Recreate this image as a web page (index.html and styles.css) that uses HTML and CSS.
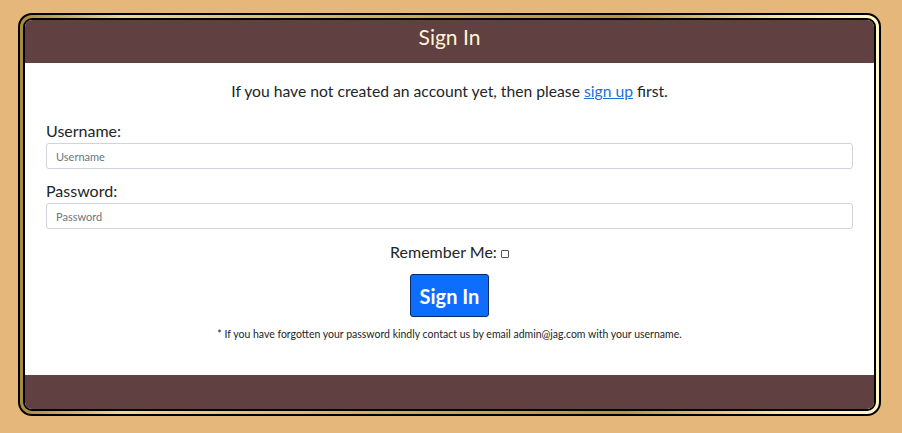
FILE: index.html
```html
<!DOCTYPE html>
<html lang="en">
<head>
<meta charset="utf-8">
<title>Sign In</title>
<link rel="stylesheet" href="styles.css">
</head>
<body>
<div class="frame">
  <div class="card">
    <div class="card-header">Sign In</div>
    <div class="card-body">
      <p class="intro">If you have not created an account yet, then please <a href="#">sign up</a> first.</p>
      <label class="label" for="username">Username:</label>
      <input class="input" id="username" type="text" placeholder="Username">
      <label class="label label-pw" for="password">Password:</label>
      <input class="input" id="password" type="password" placeholder="Password">
      <div class="remember">Remember Me: <input class="check" type="checkbox"></div>
      <div class="actions"><button class="btn" type="button">Sign In</button></div>
      <p class="note">* If you have forgotten your password kindly contact us by email admin@jag.com with your username.</p>
    </div>
    <div class="card-footer"></div>
  </div>
</div>
</body>
</html>
```
FILE: styles.css
```css
html, body {
  margin: 0;
  padding: 0;
}
body {
  background: #e5b77b;
  font-family: Lato, "Open Sans", sans-serif;
  color: #212529;
  padding: 13px 21px 17px 18px;
}
.frame {
  border: 2px solid #000;
  border-radius: 14px;
  padding: 3px;
  background: linear-gradient(to right, #a88a3a 0%, #e9d996 12%, #cdb060 40%, #b8923e 70%, #f3e4a4 88%, #fff8c8 100%);
}
.card {
  border: 2px solid #000;
  border-radius: 9px;
  overflow: hidden;
  background: #fff;
}
.card-header {
  background: #604040;
  color: #fff3d2;
  height: 43px;
  display: flex;
  align-items: center;
  justify-content: center;
  font-size: 21px;
  padding-bottom: 10px;
  box-sizing: border-box;
}
.card-body {
  padding: 16px 21px 0;
  height: 312px;
  box-sizing: border-box;
  display: flex;
  flex-direction: column;
}
.intro {
  margin: 0 0 16px;
  text-align: center;
  font-size: 15.7px;
  line-height: 24px;
}
.intro a {
  color: #1e6fd9;
}
.label {
  display: block;
  font-size: 16px;
  line-height: 24px;
}
.label-pw {
  margin-top: 10px;
}
.input {
  box-sizing: border-box;
  width: 100%;
  height: 26px;
  border: 1px solid #ced4da;
  border-radius: 3px;
  padding: 0 9px;
  font-family: Lato, sans-serif;
  font-size: 11px;
  color: #212529;
  outline: none;
}
.input::placeholder {
  color: #6c757d;
}
.remember {
  margin-top: 11px;
  text-align: center;
  font-size: 16px;
  line-height: 24px;
}
.check {
  appearance: none;
  -webkit-appearance: none;
  width: 8px;
  height: 8px;
  border: 1px solid #555;
  border-radius: 1px;
  margin: 0;
  vertical-align: 0;
  background: #fff;
}
.actions {
  margin-top: 10px;
  display: flex;
  justify-content: center;
}
.btn {
  background: #0d6efd;
  color: #fff;
  border: 1px solid #0a2a66;
  border-radius: 3px;
  height: 43px;
  width: 79px;
  font-family: Lato, sans-serif;
  font-weight: 700;
  font-size: 20px;
  padding: 0;
  cursor: pointer;
}
.note {
  margin: 10px 0 0;
  text-align: center;
  font-size: 10.5px;
  line-height: 15px;
}
.card-footer {
  background: #604040;
  height: 34px;
}
```
